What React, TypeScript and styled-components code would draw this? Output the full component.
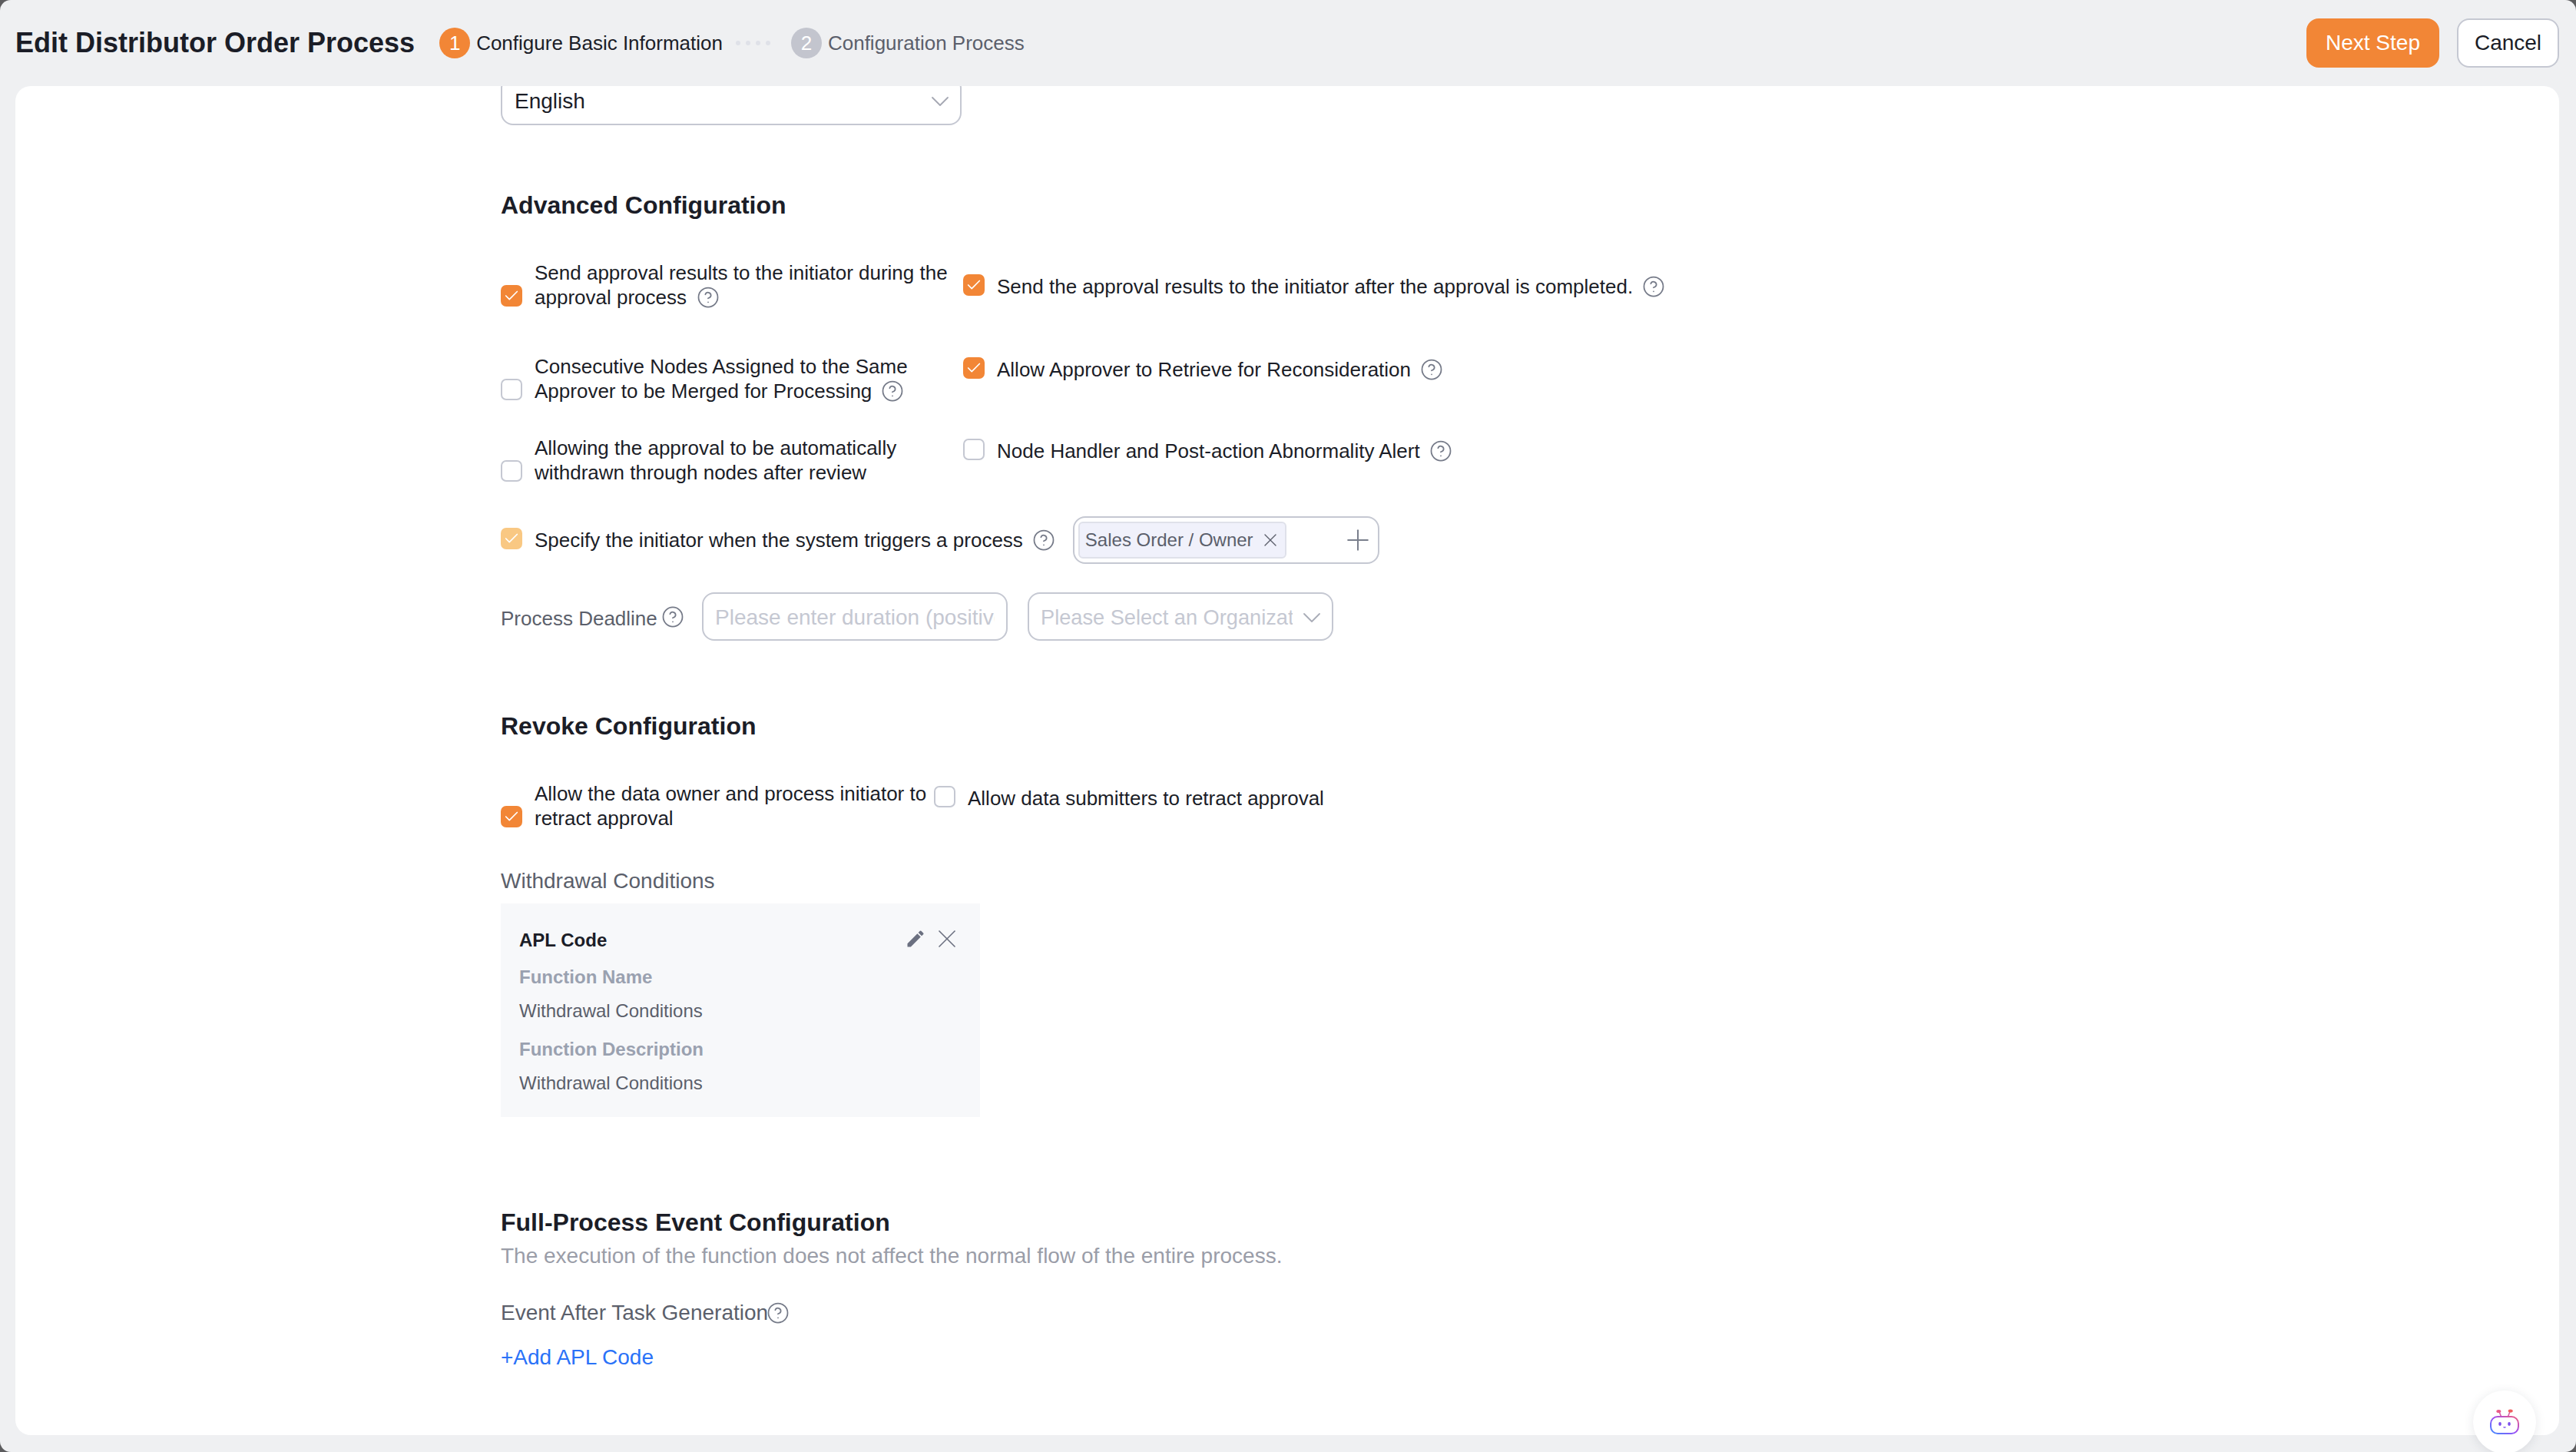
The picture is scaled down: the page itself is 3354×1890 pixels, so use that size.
import React from "react";
import styled, { createGlobalStyle } from "styled-components";
import { Check, ChevronDown, CircleHelp, Plus, X } from "lucide-react";
import { MdEdit } from "react-icons/md";

const GlobalStyle = createGlobalStyle`
  html, body { margin: 0; padding: 0; background: #5c5c5e; }
  * { box-sizing: border-box; }
  body { font-family: "Liberation Sans", Arial, sans-serif; color: #1b1d27; }
`;

const Page = styled.div`
  position: relative;
  width: 3354px;
  height: 1890px;
  overflow: hidden;
  border-radius: 14px;
  background: #eff0f2;
  display: flex;
  flex-direction: column;
  padding: 0 22px 22px 20px;
`;

const Header = styled.header`
  height: 112px;
  flex: none;
  display: flex;
  align-items: center;
`;

const Title = styled.h1`
  margin: 0 32px 0 0;
  font-size: 36px;
  line-height: 44px;
  font-weight: 700;
  white-space: nowrap;
`;

const Step = styled.div`
  display: flex;
  align-items: center;
  gap: 8px;
`;

const StepNumber = styled.span<{ $active?: boolean }>`
  width: 40px;
  height: 40px;
  border-radius: 50%;
  background: ${(p) => (p.$active ? "#f28636" : "#c3c5ce")};
  color: #fff;
  font-size: 26px;
  display: flex;
  align-items: center;
  justify-content: center;
`;

const StepLabel = styled.span<{ $active?: boolean }>`
  font-size: 26px;
  color: ${(p) => (p.$active ? "#1b1d27" : "#5b5f6b")};
  white-space: nowrap;
`;

const StepDots = styled.div`
  display: flex;
  gap: 7px;
  margin: 0 27px 0 17px;
  & > i {
    width: 6px;
    height: 6px;
    border-radius: 50%;
    background: #dfe1e8;
  }
`;

const Actions = styled.div`
  margin-left: auto;
  display: flex;
  gap: 23px;
`;

const Button = styled.button<{ $primary?: boolean }>`
  height: 64px;
  width: ${(p) => (p.$primary ? "173px" : "133px")};
  border-radius: 16px;
  border: 2px solid ${(p) => (p.$primary ? "#f28636" : "#c5c8d2")};
  background: ${(p) => (p.$primary ? "#f28636" : "#fff")};
  color: ${(p) => (p.$primary ? "#fff" : "#1b1d27")};
  font-family: inherit;
  font-size: 28px;
  padding: 0;
`;

const Card = styled.main`
  flex: 1;
  background: #fff;
  border-radius: 20px;
  overflow: hidden;
  padding-left: 632px;
`;

const LanguageSelect = styled.div`
  width: 600px;
  height: 64px;
  margin-top: -13px;
  padding: 2px 6px 0 16px;
  border: 2px solid #c5c8d2;
  border-radius: 16px;
  display: flex;
  align-items: center;
  justify-content: space-between;
  font-size: 28px;
  color: #1b1d27;
`;

const SectionTitle = styled.h2<{ $top: number }>`
  margin: ${(p) => p.$top}px 0 0;
  font-size: 32px;
  line-height: 40px;
  font-weight: 700;
  color: #1b1d27;
`;

const OptionGroup = styled.div<{ $top: number }>`
  margin-top: ${(p) => p.$top}px;
  display: flex;
  flex-direction: column;
  gap: 42px;
`;

const OptionRow = styled.div<{ $extra?: number }>`
  display: flex;
  align-items: flex-start;
  margin-bottom: ${(p) => p.$extra ?? 0}px;
`;

const Option = styled.label<{ $width?: number; $offset?: number }>`
  display: flex;
  align-items: flex-end;
  gap: 16px;
  flex: none;
  width: ${(p) => (p.$width ? `${p.$width}px` : "auto")};
  padding-top: ${(p) => p.$offset ?? 0}px;
`;

const Box = styled.span<{ $checked?: boolean; $muted?: boolean }>`
  flex: none;
  width: 28px;
  height: 28px;
  margin-bottom: 4px;
  border-radius: 7px;
  border: 2px solid
    ${(p) => (p.$muted ? "#f9c883" : p.$checked ? "#f28636" : "#c5c8d2")};
  background: ${(p) => (p.$muted ? "#f9c883" : p.$checked ? "#f28636" : "#fff")};
  color: #fff;
  display: flex;
  align-items: center;
  justify-content: center;
`;

const OptionText = styled.span<{ $wrap?: number }>`
  font-size: 26px;
  line-height: 32px;
  color: #1b1d27;
  width: ${(p) => (p.$wrap ? `${p.$wrap}px` : "auto")};
  white-space: ${(p) => (p.$wrap ? "normal" : "nowrap")};
`;

const HelpIcon = styled(CircleHelp).attrs({ size: 30, strokeWidth: 1.4 })<{ $left?: number }>`
  color: #757a88;
  vertical-align: baseline;
  margin: -10px 0 -6px ${(p) => p.$left ?? 12}px;
`;

const InitiatorRow = styled.div`
  margin-top: 41px;
  height: 62px;
  display: flex;
  align-items: center;
`;

const TagInput = styled.div`
  width: 399px;
  height: 62px;
  margin-left: 23px;
  padding: 0 4px 0 5px;
  border: 2px solid #c5c8d2;
  border-radius: 16px;
  display: flex;
  align-items: center;
  justify-content: space-between;
  color: #7a7f8c;
`;

const Tag = styled.span`
  width: 271px;
  height: 48px;
  padding: 0 5px 0 7px;
  background: #f0f1fb;
  border: 2px solid #dfe1ea;
  border-radius: 6px;
  display: flex;
  align-items: center;
  justify-content: space-between;
  font-size: 24px;
  color: #5b5f6b;
  white-space: nowrap;
`;

const DeadlineRow = styled.div`
  margin-top: 37px;
  height: 63px;
  display: flex;
  align-items: center;
`;

const DeadlineLabel = styled.span`
  width: 262px;
  padding-top: 5px;
  font-size: 26px;
  color: #5b5f6b;
  display: flex;
  align-items: center;
  white-space: nowrap;
`;

const Field = styled.div<{ $left?: number; $select?: boolean }>`
  width: 398px;
  height: 63px;
  margin-left: ${(p) => p.$left ?? 0}px;
  padding: 2px ${(p) => (p.$select ? 6 : 15)}px 0 15px;
  border: 2px solid #c5c8d2;
  border-radius: 16px;
  display: flex;
  align-items: center;
  gap: 5px;
  color: #a9acb7;
`;

const Placeholder = styled.span<{ $size: number }>`
  flex: 1;
  overflow: hidden;
  white-space: nowrap;
  font-size: ${(p) => p.$size}px;
  color: #c5c8d2;
`;

const FieldCaption = styled.div<{ $top: number }>`
  margin-top: ${(p) => p.$top}px;
  font-size: 28px;
  line-height: 36px;
  color: #5b5f6b;
`;

const ApiPanel = styled.section`
  position: relative;
  width: 624px;
  height: 278px;
  margin-top: 11px;
  padding: 32px 24px 0;
  background: #f7f8fa;
`;

const PanelTitle = styled.div`
  font-size: 24px;
  line-height: 32px;
  font-weight: 700;
  color: #1b1d27;
`;

const PanelTools = styled.div`
  position: absolute;
  top: 26px;
  right: 23px;
  display: flex;
  align-items: center;
  gap: 7px;
  color: #6b7080;
`;

const PanelLabel = styled.div<{ $top: number }>`
  margin-top: ${(p) => p.$top}px;
  font-size: 24px;
  line-height: 32px;
  font-weight: 700;
  color: #9aa1b0;
`;

const PanelValue = styled.div`
  margin-top: 12px;
  font-size: 24px;
  line-height: 32px;
  color: #5b5f6b;
`;

const Description = styled.p`
  margin: 8px 0 0;
  font-size: 28px;
  line-height: 32px;
  color: #9a9da8;
`;

const EventLabel = styled.div`
  margin-top: 42px;
  font-size: 28px;
  line-height: 32px;
  color: #5b5f6b;
`;

const AddLink = styled.a`
  display: block;
  margin-top: 26px;
  font-size: 28px;
  line-height: 32px;
  color: #2a72f8;
`;

const BotBubble = styled.div`
  position: absolute;
  left: 3220px;
  top: 1810px;
  width: 82px;
  height: 82px;
  border-radius: 50%;
  background: #fff;
  box-shadow: 0 2px 14px rgba(30, 35, 60, 0.1);
  display: flex;
  align-items: center;
  justify-content: center;
`;

const CheckBox: React.FC<{ checked?: boolean; muted?: boolean }> = ({ checked, muted }) => (
  <Box $checked={checked} $muted={muted}>
    {(checked || muted) && <Check size={22} strokeWidth={1.8} />}
  </Box>
);

const BotIcon = () => (
  <svg width="40" height="34" viewBox="0 0 40 34" fill="none">
    <defs>
      <linearGradient id="botStroke" x1="0" y1="1" x2="1" y2="0">
        <stop offset="0" stopColor="#3f8cff" />
        <stop offset="0.5" stopColor="#9b4df5" />
        <stop offset="1" stopColor="#f2607c" />
      </linearGradient>
    </defs>
    <path d="M13 3.5l2.8 7M27 3.5l-2.8 7" stroke="#d85ca8" strokeWidth="1.6" />
    <ellipse cx="12.3" cy="3" rx="3" ry="2" fill="#ea5a8a" />
    <ellipse cx="27.7" cy="2.6" rx="3" ry="2" fill="#f0605f" />
    <rect x="2" y="10" width="36" height="22" rx="9" stroke="url(#botStroke)" strokeWidth="2" />
    <ellipse cx="14" cy="19.5" rx="1.8" ry="2.4" fill="#7d50ee" />
    <ellipse cx="26" cy="19.5" rx="1.8" ry="2.4" fill="#7d50ee" />
    <path d="M18.5 23.5q1.5 1 3 0" stroke="#7d50ee" strokeWidth="1.4" />
  </svg>
);

export default function App() {
  return (
    <Page>
      <GlobalStyle />
      <Header>
        <Title>Edit Distributor Order Process</Title>
        <Step>
          <StepNumber $active>1</StepNumber>
          <StepLabel $active>Configure Basic Information</StepLabel>
        </Step>
        <StepDots>
          <i />
          <i />
          <i />
          <i />
        </StepDots>
        <Step>
          <StepNumber>2</StepNumber>
          <StepLabel>Configuration Process</StepLabel>
        </Step>
        <Actions>
          <Button $primary>Next Step</Button>
          <Button>Cancel</Button>
        </Actions>
      </Header>

      <Card>
        <LanguageSelect>
          English
          <ChevronDown size={40} strokeWidth={1.1} color="#a5a8b3" />
        </LanguageSelect>

        <SectionTitle $top={84}>Advanced Configuration</SectionTitle>
        <OptionGroup $top={52}>
          <OptionRow $extra={16}>
            <Option $width={602}>
              <CheckBox checked />
              <OptionText $wrap={550}>
                Send approval results to the initiator during the approval process
                <HelpIcon $left={13} />
              </OptionText>
            </Option>
            <Option $offset={18}>
              <CheckBox checked />
              <OptionText>
                Send the approval results to the initiator after the approval is completed.
                <HelpIcon />
              </OptionText>
            </Option>
          </OptionRow>
          <OptionRow>
            <Option $width={602}>
              <CheckBox />
              <OptionText $wrap={540}>
                Consecutive Nodes Assigned to the Same Approver to be Merged for Processing
                <HelpIcon />
              </OptionText>
            </Option>
            <Option $offset={4}>
              <CheckBox checked />
              <OptionText>
                Allow Approver to Retrieve for Reconsideration
                <HelpIcon />
              </OptionText>
            </Option>
          </OptionRow>
          <OptionRow>
            <Option $width={602}>
              <CheckBox />
              <OptionText $wrap={540}>
                Allowing the approval to be automatically withdrawn through nodes after review
              </OptionText>
            </Option>
            <Option $offset={4}>
              <CheckBox />
              <OptionText>
                Node Handler and Post-action Abnormality Alert
                <HelpIcon />
              </OptionText>
            </Option>
          </OptionRow>
        </OptionGroup>

        <InitiatorRow>
          <Option>
            <CheckBox muted />
            <OptionText>
              Specify the initiator when the system triggers a process
              <HelpIcon />
            </OptionText>
          </Option>
          <TagInput>
            <Tag>
              Sales Order / Owner
              <X size={28} strokeWidth={1.2} />
            </Tag>
            <Plus size={44} strokeWidth={1.1} />
          </TagInput>
        </InitiatorRow>

        <DeadlineRow>
          <DeadlineLabel>
            Process Deadline
            <HelpIcon $left={5} />
          </DeadlineLabel>
          <Field>
            <Placeholder $size={28}>Please enter duration (positive integer)</Placeholder>
          </Field>
          <Field $left={26} $select>
            <Placeholder $size={27.2}>Please Select an Organization</Placeholder>
            <ChevronDown size={40} strokeWidth={1.1} />
          </Field>
        </DeadlineRow>

        <SectionTitle $top={91}>Revoke Configuration</SectionTitle>
        <OptionGroup $top={52}>
          <OptionRow>
            <Option $width={564}>
              <CheckBox checked />
              <OptionText $wrap={515}>
                Allow the data owner and process initiator to retract approval
              </OptionText>
            </Option>
            <Option $offset={6}>
              <CheckBox />
              <OptionText>Allow data submitters to retract approval</OptionText>
            </Option>
          </OptionRow>
        </OptionGroup>

        <FieldCaption $top={48}>Withdrawal Conditions</FieldCaption>
        <ApiPanel>
          <PanelTitle>APL Code</PanelTitle>
          <PanelTools>
            <MdEdit size={28} />
            <X size={40} strokeWidth={1} />
          </PanelTools>
          <PanelLabel $top={16}>Function Name</PanelLabel>
          <PanelValue>Withdrawal Conditions</PanelValue>
          <PanelLabel $top={18}>Function Description</PanelLabel>
          <PanelValue>Withdrawal Conditions</PanelValue>
        </ApiPanel>

        <SectionTitle $top={117}>Full-Process Event Configuration</SectionTitle>
        <Description>The execution of the function does not affect the normal flow of the entire process.</Description>
        <EventLabel>
          Event After Task Generation
          <HelpIcon $left={-2} />
        </EventLabel>
        <AddLink>+Add APL Code</AddLink>
      </Card>

      <BotBubble>
        <BotIcon />
      </BotBubble>
    </Page>
  );
}
